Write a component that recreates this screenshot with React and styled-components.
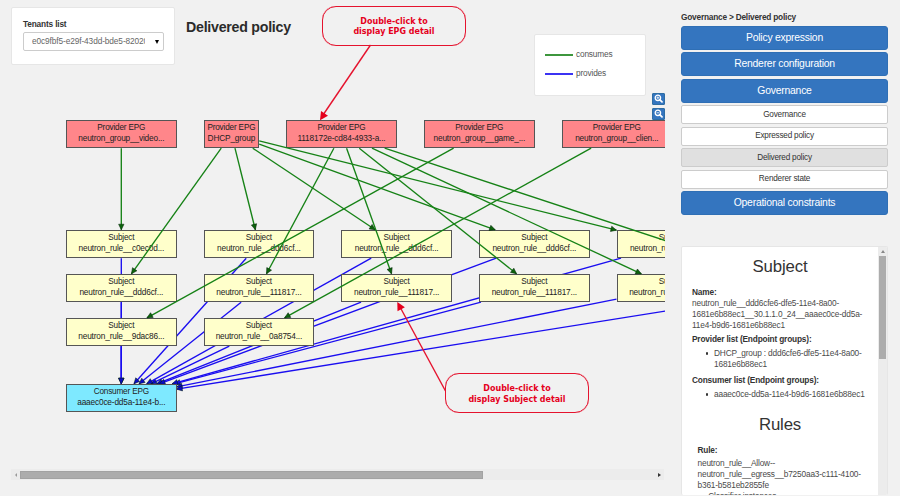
import React from "react";
import styled, { createGlobalStyle } from "styled-components";

const GlobalStyle = createGlobalStyle`
  * { box-sizing: border-box; }
  body {
    margin: 0;
    background: #f1f1f1;
    color: #333;
    font-family: "Liberation Sans", Arial, sans-serif;
    font-size: 8.3px;
    line-height: 11px;
    letter-spacing: -0.17px;
  }
`;

/* ---------- page frame ---------- */

const Page = styled.div`
  display: grid;
  grid-template-columns: 665px 207px;
  column-gap: 16px;
  width: 900px;
  height: 496px;
  overflow: hidden;
  background: #f1f1f1;
`;

const Main = styled.main`
  position: relative;
  display: flex;
  flex-direction: column;
  min-width: 0;
  padding-left: 11px;
`;

const Header = styled.header`
  display: flex;
  align-items: flex-start;
  height: 119px;
  padding-top: 7px;
`;

const Card = styled.section`
  background: #fff;
  border: 1px solid #e6e6e6;
  border-radius: 2px;
`;

const TenantCard = styled(Card)`
  width: 164px;
  height: 58px;
  padding: 10px 11px;
`;

const Label = styled.label`
  display: block;
  font-weight: bold;
  line-height: 12px;
`;

const Select = styled.div`
  display: flex;
  align-items: center;
  justify-content: space-between;
  width: 141px;
  height: 19px;
  margin-top: 2px;
  padding: 0 4px 0 8px;
  border: 1px solid #ccc;
  border-radius: 2px;
  color: #666;
`;

const SelectValue = styled.span`
  width: 112.5px;
  overflow: hidden;
  white-space: nowrap;
  letter-spacing: -0.1px;
`;

const Caret = styled.i`
  border: 2px solid transparent;
  border-top: 4px solid #000;
  border-bottom: 0;
`;

const Title = styled.h1`
  flex: 1;
  margin: 12px 0 0 11px;
  font-size: 14.2px;
  line-height: 17px;
  letter-spacing: -0.25px;
  color: #2b2b2b;
`;

const Legend = styled(Card)`
  display: flex;
  flex-direction: column;
  gap: 8px;
  width: 112px;
  height: 62px;
  margin: 27px 19px 0 0;
  padding: 14px 10px;
`;

const LegendRow = styled.div`
  display: flex;
  align-items: center;
  gap: 3px;
  height: 11px;
  color: #555;
  &::before {
    content: "";
    width: 28px;
    height: 2px;
    opacity: 0.8;
    background: ${(p) => p.$color};
  }
`;

/* ---------- diagram ---------- */

const Canvas = styled.div`
  position: relative;
  height: 350px;
  overflow: hidden;
`;

const Node = styled.div`
  position: absolute;
  left: ${(p) => p.$x - 11}px;
  top: ${(p) => p.$y - 119}px;
  width: ${(p) => p.$w}px;
  height: 28px;
  padding-top: 1px;
  border: 1px solid #555;
  background: ${(p) => p.$fill};
  color: #222;
  line-height: 11px;
  text-align: center;
  white-space: nowrap;
`;

const NodeKind = styled.div`
  font-size: 8.2px;
`;

const Layer = styled.svg`
  position: absolute;
  left: 0;
  top: 0;
`;

const ZoomTools = styled.div`
  position: absolute;
  left: 652px;
  top: 92.5px;
  display: grid;
  gap: 2.5px;
`;

const ZoomButton = styled.button`
  display: flex;
  align-items: center;
  justify-content: center;
  width: 13px;
  height: 12.5px;
  padding: 0;
  border: 1px solid #2e6da4;
  border-radius: 1px;
  background: #3475bf;
`;

const Callout = styled.div`
  position: absolute;
  left: ${(p) => p.$x}px;
  top: ${(p) => p.$y}px;
  display: flex;
  align-items: center;
  justify-content: center;
  width: 144px;
  height: 40px;
  padding-top: 1px;
  border: 1.4px solid #e5132e;
  border-radius: 14px;
  box-shadow: 0 0 0.6px #e5132e;
  color: #e5001c;
  font: bold 8.9px/10.5px "DejaVu Sans", sans-serif;
  font-stretch: condensed;
  letter-spacing: 0;
  text-align: center;
  white-space: pre;
`;

/* ---------- horizontal scrollbar ---------- */

const HScroll = styled.div`
  display: flex;
  align-items: center;
  justify-content: space-between;
  width: 653px;
  height: 11px;
  padding: 0 3px 0 4px;
  background: #ececec;
`;

const HThumb = styled.div`
  flex: none;
  width: 463px;
  height: 8px;
  margin-right: auto;
  margin-left: 3px;
  background: #acacac;
  border: 1px solid #a2a2a2;
`;

const Arrow = styled.i`
  flex: none;
  border: 2px solid transparent;
  ${(p) => (p.$side === "left" ? "border-right: 2.5px solid #999; border-left: 0;" : "")}
  ${(p) => (p.$side === "right" ? "border-left: 3px solid #333; border-right: 0;" : "")}
  ${(p) => (p.$side === "up" ? "border-bottom: 3px solid #888; border-top: 0;" : "")}
`;

/* ---------- sidebar ---------- */

const Sidebar = styled.aside`
  display: flex;
  flex-direction: column;
  min-width: 0;
  height: 496px;
  padding-top: 11px;
`;

const Breadcrumb = styled.div`
  height: 15px;
  font-weight: bold;
  line-height: 12px;
  letter-spacing: -0.21px;
  white-space: nowrap;
`;

const Menu = styled.nav`
  display: flex;
  flex-direction: column;
  gap: 2.4px;
`;

const MenuButton = styled.button`
  width: 207px;
  height: 24px;
  padding: 0;
  border: 1px solid #2f6fb5;
  border-radius: 3px;
  background: #3475bf;
  color: #fff;
  font: 10.4px/20px "Liberation Sans", Arial, sans-serif;
  letter-spacing: -0.23px;
`;

const SubButton = styled.button`
  width: 207px;
  height: 19.1px;
  padding: 0;
  border: 1px solid #ccc;
  border-radius: 2px;
  background: ${(p) => (p.$active ? "#e0e0e0" : "#fff")};
  color: #333;
  font: 8.2px/16px "Liberation Sans", Arial, sans-serif;
  letter-spacing: -0.2px;
`;

const DetailPanel = styled(Card)`
  display: flex;
  flex: none;
  width: 207px;
  height: 249px;
  margin-top: 31px;
  border-bottom: 0;
  overflow: hidden;
`;

const DetailBody = styled.div`
  flex: 1;
  min-width: 0;
  padding: 0 0 0 10px;
  white-space: nowrap;
  color: #4a4a4a;
`;

const Heading = styled.h2`
  margin: ${(p) => p.$top}px 10px 0 0;
  font-size: 16.8px;
  font-weight: normal;
  line-height: 18px;
  text-align: center;
  color: #333;
`;

const Term = styled.div`
  margin-top: ${(p) => p.$top}px;
  font-weight: bold;
  color: #333;
`;

const List = styled.ul`
  margin: 3px 0 0;
  padding-left: 22px;
  list-style: none;
`;

const Item = styled.li`
  position: relative;
  &::before {
    content: "";
    position: absolute;
    left: -8px;
    top: 4.5px;
    width: 2.4px;
    height: 2.4px;
    border-radius: 50%;
    background: #333;
  }
`;

const Rule = styled.div`
  padding-left: 5.5px;
`;

const Text = styled.div`
  margin-top: ${(p) => p.$top || 0}px;
`;

const VScroll = styled.div`
  display: flex;
  flex-direction: column;
  align-items: center;
  flex: none;
  width: 9px;
  padding-top: 3px;
  background: #ececec;
`;

const VThumb = styled.div`
  width: 7px;
  height: 103px;
  margin-top: 3px;
  background: #acacac;
`;

/* ---------- data ---------- */

const COLS = [66, 203.6, 341.3, 479, 616.5, 754.2];
const ROWS = [230, 274, 318];
const W = 110.6;

const providers = [
  { x: 66, w: W, name: "neutron_group__video..." },
  { x: 203.6, w: 55.6, name: "DHCP_group" },
  { x: 286.2, w: W, name: "1118172e-cd84-4933-a..." },
  { x: 424, w: W, name: "neutron_group__game_..." },
  { x: 561.5, w: W, name: "neutron_group__clien..." },
].map((n) => ({ ...n, y: 120 }));

const subjects = [
  [0, 0, "c0ec0d"],
  [0, 1, "ddd6cf"],
  [0, 2, "9dac86"],
  [1, 0, "ddd6cf"],
  [1, 1, "111817"],
  [1, 2, "0a8754"],
  [2, 0, "ddd6cf"],
  [2, 1, "111817"],
  [3, 0, "ddd6cf"],
  [3, 1, "111817"],
  [4, 0, "ddd6cf"],
  [4, 1, "111817"],
  [5, 1, "111817"],
].map(([c, r, id]) => ({
  key: `${c}${r}`,
  x: COLS[c],
  y: ROWS[r],
  w: W,
  name: `neutron_rule__${id}...`,
}));

/* subjects scrolled out of view keep their links but need no box */
const visibleSubjects = subjects.filter((s) => s.x < 665);

const consumer = { x: 66, y: 384, w: W, name: "aaaec0ce-dd5a-11e4-b..." };

const consumes = [
  [0, "00"],
  [1, "01"],
  [1, "10"],
  [1, "20"],
  [1, "30"],
  [1, "40"],
  [2, "11"],
  [2, "21"],
  [2, "31"],
  [2, "41"],
  [2, "51"],
  [3, "02"],
  [4, "12"],
];

const center = (n) => [n.x + n.w / 2, n.y + 14];

/* point where the segment from n's centre towards (tx, ty) leaves n's box */
function edgePoint(n, [tx, ty]) {
  const [cx, cy] = center(n);
  const dx = tx - cx;
  const dy = ty - cy;
  const k = Math.min(
    dx ? n.w / 2 / Math.abs(dx) : Infinity,
    dy ? 14.2 / Math.abs(dy) : Infinity
  );
  return [cx + dx * k, cy + dy * k];
}

function Link({ from, to, color, head }) {
  const [x1, y1] = edgePoint(from, center(to));
  const [x2, y2] = edgePoint(to, center(from));
  const angle = (Math.atan2(y2 - y1, x2 - x1) * 180) / Math.PI;
  return (
    <g>
      <line x1={x1} y1={y1} x2={x2} y2={y2} stroke={color} strokeWidth="1.35" />
      <path
        d="M0 0L-5.6 -2.7V2.7Z"
        transform={`translate(${x2} ${y2}) rotate(${angle})`}
        fill={head}
        stroke="#06250a"
        strokeWidth="0.5"
      />
    </g>
  );
}

function Magnifier({ plus }) {
  return (
    <svg width="9" height="9" viewBox="0 0 9 9" fill="none" stroke="#fff">
      <circle cx="3.9" cy="3.8" r="2.7" strokeWidth="1.3" />
      <path d="M5.9 5.8L8 7.9" strokeWidth="1.7" strokeLinecap="round" />
      <path d={plus ? "M2.5 3.8H5.3M3.9 2.4V5.2" : "M2.5 3.8H5.3"} strokeWidth="0.8" />
    </svg>
  );
}

function Box({ node, kind, fill }) {
  return (
    <Node $x={node.x} $y={node.y} $w={node.w} $fill={fill}>
      <NodeKind>{kind}</NodeKind>
      {node.name}
    </Node>
  );
}

function Diagram() {
  return (
    <Canvas>
      <Layer width="654" height="350" viewBox="11 119 654 350">
        {subjects.map((s) => (
          <Link key={s.key} from={s} to={consumer} color="#1a0df0" head="#0a0ac8" />
        ))}
      </Layer>
      {providers.map((p) => (
        <Box key={p.name} node={p} kind="Provider EPG" fill="#ff868a" />
      ))}
      {visibleSubjects.map((s) => (
        <Box key={s.key} node={s} kind="Subject" fill="#ffffcb" />
      ))}
      <Box node={consumer} kind="Consumer EPG" fill="#7ee9ff" />
      <Layer width="654" height="350" viewBox="11 119 654 350">
        {consumes.map(([p, key]) => (
          <Link
            key={p + key}
            from={providers[p]}
            to={subjects.find((s) => s.key === key)}
            color="#168216"
            head="#0c640c"
          />
        ))}
      </Layer>
    </Canvas>
  );
}

function Details() {
  return (
    <DetailPanel>
      <DetailBody>
        <Heading $top={11}>Subject</Heading>
        <Term $top={10.5}>Name:</Term>
        <Text>
          neutron_rule__ddd6cfe6-dfe5-11e4-8a00-
          <br />
          1681e6b88ec1__30.1.1.0_24__aaaec0ce-dd5a-
          <br />
          11e4-b9d6-1681e6b88ec1
        </Text>
        <Term $top={3}>Provider list (Endpoint groups):</Term>
        <List>
          <Item>
            DHCP_group : ddd6cfe6-dfe5-11e4-8a00-
            <br />
            1681e6b88ec1
          </Item>
        </List>
        <Term $top={5}>Consumer list (Endpoint groups):</Term>
        <List>
          <Item>aaaec0ce-dd5a-11e4-b9d6-1681e6b88ec1</Item>
        </List>
        <Heading $top={16.5}>Rules</Heading>
        <Rule>
          <Term $top={10.5}>Rule:</Term>
          <Text $top={2.5}>
            neutron_rule__Allow--
            <br />
            neutron_rule__egress__b7250aa3-c111-4100-
            <br />
            b361-b581eb2855fe
          </Text>
          <Text>&nbsp;&nbsp;&nbsp;&nbsp;&nbsp;Classifier instances</Text>
        </Rule>
      </DetailBody>
      <VScroll>
        <Arrow $side="up" />
        <VThumb />
      </VScroll>
    </DetailPanel>
  );
}

export default function App() {
  return (
    <Page>
      <GlobalStyle />
      <Main>
        <Header>
          <TenantCard>
            <Label>Tenants list</Label>
            <Select>
              <SelectValue>e0c9fbf5-e29f-43dd-bde5-820201</SelectValue>
              <Caret />
            </Select>
          </TenantCard>
          <Title>Delivered policy</Title>
          <Legend>
            <LegendRow $color="#0c7c0c">consumes</LegendRow>
            <LegendRow $color="#0a00f0">provides</LegendRow>
          </Legend>
        </Header>
        <Diagram />
        <HScroll>
          <Arrow $side="left" />
          <HThumb />
          <Arrow $side="right" />
        </HScroll>
        <ZoomTools>
          <ZoomButton aria-label="Zoom in">
            <Magnifier plus />
          </ZoomButton>
          <ZoomButton aria-label="Zoom out">
            <Magnifier />
          </ZoomButton>
        </ZoomTools>
        <Layer width="665" height="496" stroke="#e5132e" strokeWidth="1.4" fill="#e5001c">
          <path d="M370.5 45L323 115" />
          <path d="M320 120.3L321 111L328 115.8Z" stroke="none" />
          <path d="M445.5 391L400 307" />
          <path d="M397.3 302L397.5 311.3L404.9 307.3Z" stroke="none" />
        </Layer>
        <Callout $x={322} $y={5.5}>{"Double-click to\ndisplay EPG detail"}</Callout>
        <Callout $x={445} $y={373}>{"Double-click to\ndisplay Subject detail"}</Callout>
      </Main>
      <Sidebar>
        <Breadcrumb>Governance &gt; Delivered policy</Breadcrumb>
        <Menu>
          <MenuButton>Policy expression</MenuButton>
          <MenuButton>Renderer configuration</MenuButton>
          <MenuButton>Governance</MenuButton>
          <SubButton>Governance</SubButton>
          <SubButton>Expressed policy</SubButton>
          <SubButton $active>Delivered policy</SubButton>
          <SubButton>Renderer state</SubButton>
          <MenuButton>Operational constraints</MenuButton>
        </Menu>
        <Details />
      </Sidebar>
    </Page>
  );
}
